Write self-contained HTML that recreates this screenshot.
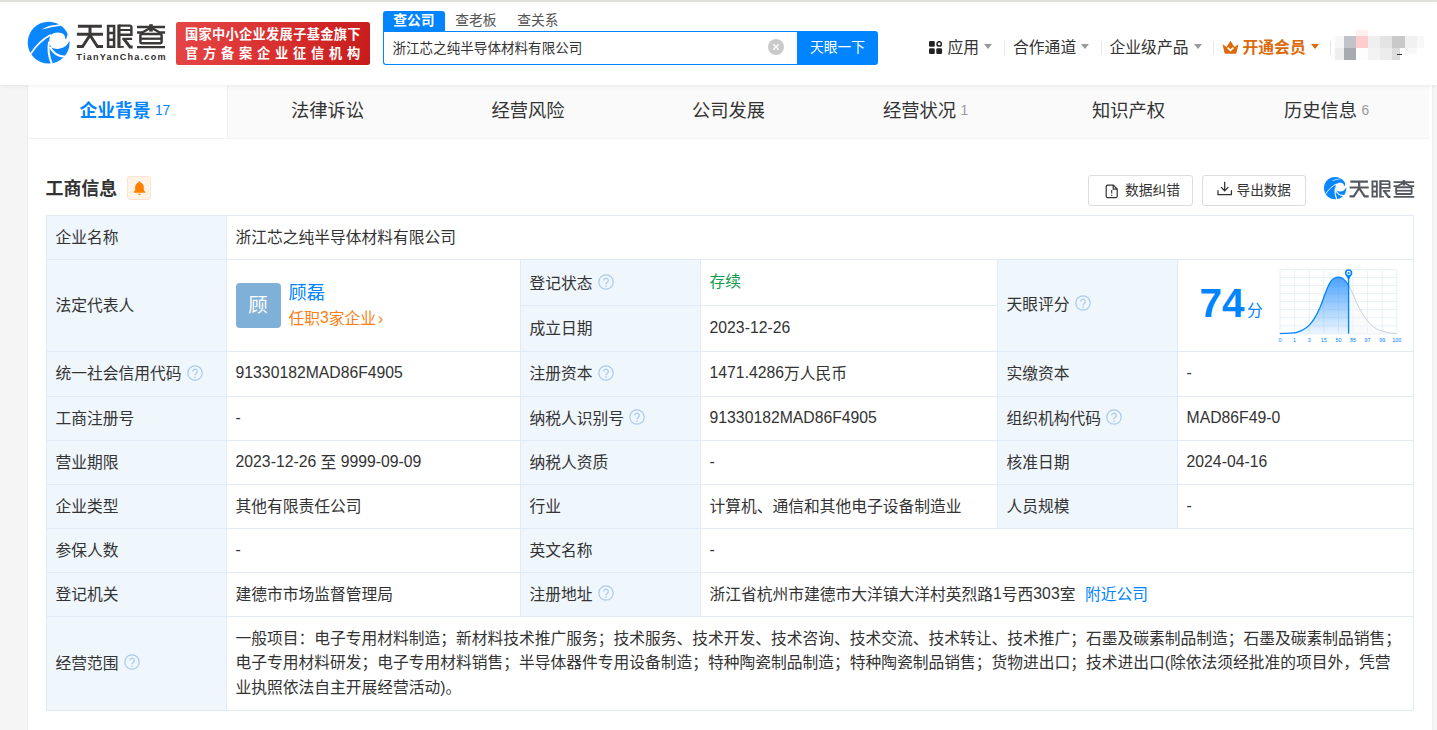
<!DOCTYPE html>
<html lang="zh-CN">
<head>
<meta charset="utf-8">
<title>浙江芯之纯半导体材料有限公司 - 天眼查</title>
<style>
*{box-sizing:border-box;margin:0;padding:0}
html,body{width:1437px;height:730px;overflow:hidden}
body{background:#f5f5f5;font-family:"Liberation Sans","Noto Sans CJK SC",sans-serif;color:#333;position:relative;font-size:15.75px;line-height:24px}
.abs{position:absolute;white-space:nowrap}
a{color:inherit;text-decoration:none}
/* top strip + header */
#strip{left:0;top:0;width:1437px;height:2px;background:#e3e2de}
#header{left:0;top:2px;width:1437px;height:83px;background:#fff;box-shadow:0 1px 4px rgba(0,0,0,.07);z-index:3}
#domain{left:76.3px;top:50.3px;font-size:9.1px;line-height:14px;font-weight:bold;letter-spacing:1.24px;color:#2f2d2d}
#badge{left:176px;top:22px;width:194px;height:43px;border-radius:2.5px;background:linear-gradient(100deg,#e64646 0%,#d93030 50%,#c81c1c 100%);color:#fff;font-weight:bold}
#badge div{position:absolute;left:9px;white-space:nowrap;font-size:13.2px;line-height:18px}
#b1{top:4.3px;letter-spacing:.33px}
#b2{top:23.3px;letter-spacing:4.8px}
/* search */
.stab{top:11px;width:62px;height:21px;font-size:13.75px;line-height:20px;text-align:center;color:#555}
#st1{left:383px;background:#0084ff;color:#fff;font-weight:bold;border-radius:3px 3px 0 0}
#st2{left:445px}
#st3{left:507px}
#sbox{left:383px;top:31px;width:415px;height:34px;border:1.5px solid #0084ff;border-right:0;border-radius:0 0 0 3px;background:#fff}
#stext{left:392.5px;top:38.5px;font-size:13.57px;line-height:20px;color:#333}
#sclear{left:767.5px;top:39px;width:16px;height:16px}
#sbtn{left:797px;top:31px;width:81px;height:34px;background:#0084ff;border-radius:0 3px 3px 0;color:#fff;font-size:13.8px;line-height:33px;text-align:center}
/* nav */
.nav{top:36px;font-size:15.8px;line-height:24px;color:#333}
.sep{top:41px;width:1px;height:14px;background:#e3e6ea}
.caret{width:0;height:0;border-left:4.2px solid transparent;border-right:4.2px solid transparent;border-top:5px solid #999;top:44px}
/* container */
#wrap{left:28px;top:85px;width:1404px;height:660px;background:#fff;box-shadow:0 0 2px rgba(0,0,0,.08)}
#tabs{left:28px;top:85px;width:1401px;height:54px;background:#fafafa;border-bottom:1px solid #f2f2f2}
#tab1{left:28px;top:85px;width:200px;height:53px;background:#fff;border-right:1px solid #f0f0f0}
.tab{top:98px;font-size:18.3px;line-height:26px;color:#333}
.tab small{font-size:13.8px;color:#999;font-weight:normal;margin-left:4.3px;position:relative;top:-2px}
#t1{color:#0084ff;font-weight:bold;font-size:17.8px}
#t1 small{color:#0084ff}
/* section head */
#h2{left:45.5px;top:175.5px;font-size:17.95px;line-height:26px;font-weight:bold;color:#333}
#bell{left:127px;top:176px;width:24px;height:24px;background:#fff3e8;border:1px solid #ffe3cc;border-radius:3px}
.btn{top:175px;height:31px;border:1px solid #dcdcdc;border-radius:3px;background:#fff;font-size:13.75px;line-height:29px;color:#333}
/* table */
#grid{left:46px;top:215px;width:1368px;height:496px;background:#e1ebf5;padding:1px;display:grid;gap:1px;
 grid-template-columns:179px 293px 179px 296px 179px 235px;
 grid-template-rows:43px 45px 45px 44px 43px 43px 43px 43px 43px 93px}
#grid>div{background:#fff;position:relative;font-size:15.75px;padding:0 0 0 8.6px;display:flex;align-items:center;white-space:nowrap}
.c{display:block;line-height:24px}
#grid>div.l{background:#eff6fc}
.q{display:inline-block;width:16px;height:16px;margin-left:5px;vertical-align:middle;position:relative;top:-1.5px;flex:none}
.blue{color:#0084ff}
.n{position:relative;top:-0.6px}

.ava{display:inline-block;width:45px;height:45px;border-radius:4px;background:#7fb0d8;color:#fff;font-size:19.5px;line-height:44px;text-align:center;flex:none}
.rep{display:inline-block;margin-left:8px;line-height:25px}
.rep a{display:block}
.nm{font-size:18.2px}
.org{color:#fb7f14}
.org i{font-style:normal;margin-left:2px}
#grid>div#scope{white-space:nowrap;display:block;line-height:24.5px;padding-top:9.75px}
.px{position:absolute;display:block}
</style>
</head>
<body>
<div id="strip" class="abs"></div>
<div id="header" class="abs"></div>

<div id="hc" class="abs" style="left:0;top:0;z-index:4">
<!-- logo -->
<svg class="abs" style="left:24.05px;top:18.35px" width="49.3" height="49.3" viewBox="0 0 730 730">
 <circle cx="365" cy="365" r="310" fill="#0a86ff"/>
 <path fill="#fff" d="M388,258C440,205 545,195 595,250C610,275 612,300 610,318L628,300C640,270 645,250 648,235L730,225L730,345L672,338C650,400 590,455 500,458C460,458 430,450 408,438C375,400 365,320 388,258Z"/>
 <path fill="#fff" d="M262,172C330,125 430,100 545,98L545,113C460,122 350,148 262,172Z"/>
 <path fill="none" stroke="#fff" stroke-width="25" d="M398,248C280,310 170,420 98,532"/>
 <path fill="none" stroke="#fff" stroke-width="30" d="M372,350C350,470 370,580 412,676"/>
 <path fill="none" stroke="#fff" stroke-width="32" d="M386,428C416,508 500,576 622,574"/>
</svg>
<svg class="abs" style="left:72px;top:20px" width="100" height="32" viewBox="0 0 100 32" stroke="#3b3838">
 <g id="tyc" fill="none">
  <path stroke-width="3" d="M5.9,6.3H29.9M4.9,14.3H31M18,5V14.3M18.6,14.3L10.6,26.5H4.9M17.4,14.3L25.4,26.5H31"/>
  <path stroke-width="2.55" d="M36.1,6H42.1V26.8H36.1ZM36.1,13H42.1M36.1,19.8H42.1"/>
  <path stroke-width="3.2" d="M46.95,4.5V27.8"/>
  <path stroke-width="2.45" d="M47,5.6H57.8a1.6,1.6 0 0 1 1.6,1.6V14.7H47"/>
  <path stroke-width="2.1" d="M47,10H59.4M50.3,18.9H60.1"/>
  <path stroke-width="2.9" d="M51.9,19L58,27H60.7"/>
  <path stroke-width="1.8" d="M46,26.9H51.8"/>
  <path stroke-width="3.6" d="M79,4.2V11.6"/>
  <path stroke-width="2.3" d="M65,7H93M65,27.1H93"/>
  <path stroke-width="2.4" d="M65,12.5H70.2L77.8,8.2M93,12.5H87.8L80.2,8.2"/>
  <rect x="68.4" y="14" width="21.2" height="9.2" rx="1.2" stroke-width="2.5"/>
  <path stroke-width="2.3" d="M68.4,18.7H89.6"/>
 </g>
</svg>
<div id="domain" class="abs">TianYanCha.com</div>
<div id="badge" class="abs bd"><div id="b1">国家中小企业发展子基金旗下</div><div id="b2">官方备案企业征信机构</div></div>
<!-- search -->
<div id="st1" class="abs stab bd">查公司</div>
<div id="st2" class="abs stab">查老板</div>
<div id="st3" class="abs stab">查关系</div>
<div id="sbox" class="abs"></div>
<div id="stext" class="abs">浙江芯之纯半导体材料有限公司</div>
<svg id="sclear" class="abs" viewBox="0 0 16 16"><circle cx="8" cy="8" r="8" fill="#c9c9c9"/><path d="M5.2,5.2L10.8,10.8M10.8,5.2L5.2,10.8" stroke="#fff" stroke-width="1.3" fill="none"/></svg>
<div id="sbtn" class="abs">天眼一下</div>
<!-- nav -->
<svg class="abs" style="left:929px;top:41px" width="14" height="14" viewBox="0 0 14 14"><rect x="0" y="0" width="5.8" height="5.8" rx="1.4" fill="#222"/><rect x="0" y="7.3" width="5.8" height="5.8" rx="1.4" fill="#222"/><rect x="7.3" y="7.3" width="5.8" height="5.8" rx="1.4" fill="#222"/><circle cx="10.2" cy="2.9" r="2.2" fill="none" stroke="#222" stroke-width="1.5"/></svg>
<div class="abs nav" style="left:947.5px">应用</div>
<div class="abs caret" style="left:984px"></div>
<div class="abs sep" style="left:1004px"></div>
<div class="abs nav" style="left:1013px">合作通道</div>
<div class="abs caret" style="left:1081px"></div>
<div class="abs sep" style="left:1101px"></div>
<div class="abs nav" style="left:1109.5px">企业级产品</div>
<div class="abs caret" style="left:1193.5px"></div>
<div class="abs sep" style="left:1213px"></div>
<svg class="abs" style="left:1221.5px;top:40px" width="17" height="15" viewBox="0 0 17 15"><path fill="#dc6a0c" d="M0.6,4.2L4.6,7L8.5,0.8L12.4,7L16.4,4.2L14.6,12.6Q14.4,13.8 13.2,13.8H3.8Q2.6,13.8 2.4,12.6Z"/><path d="M5.6,7.6L8.5,10.4L11.4,7.6" fill="none" stroke="#fff" stroke-width="1.7"/></svg>
<div class="abs nav bd" style="left:1242.5px;color:#dc6a0c;font-weight:bold">开通会员</div>
<div class="abs caret" style="left:1311px;border-top-color:#dc6a0c"></div>
<div class="abs sep" style="left:1330px"></div>
<!-- pixelated avatar -->
<div class="abs" style="left:1335px;top:30px;width:90px;height:30px">
 <i class="px" style="left:0;top:6px;width:9px;height:12px;background:#f7f7f7"></i>
 <i class="px" style="left:9px;top:6px;width:12px;height:12px;background:#c1c3c8"></i>
 <i class="px" style="left:21px;top:0;width:12px;height:6px;background:#fff0f0"></i>
 <i class="px" style="left:21px;top:6px;width:12px;height:12px;background:#ffcdcd"></i>
 <i class="px" style="left:33px;top:6px;width:12px;height:12px;background:#efefef"></i>
 <i class="px" style="left:45px;top:6px;width:12px;height:12px;background:#e4e4e4"></i>
 <i class="px" style="left:57px;top:6px;width:12.5px;height:12px;background:#c9c9c9"></i>
 <i class="px" style="left:69.5px;top:6px;width:12px;height:12px;background:#f1f1f1"></i>
 <i class="px" style="left:81.5px;top:6px;width:7px;height:12px;background:#f8f8f8"></i>
 <i class="px" style="left:0;top:18px;width:9px;height:12px;background:#eeeeee"></i>
 <i class="px" style="left:9px;top:18px;width:12px;height:12px;background:#a7abb0"></i>
 <i class="px" style="left:21px;top:18px;width:12px;height:12px;background:#fdfdfd"></i>
 <i class="px" style="left:33px;top:18px;width:12px;height:12px;background:#f3f3f3"></i>
 <i class="px" style="left:45px;top:18px;width:12px;height:12px;background:#ececec"></i>
 <i class="px" style="left:57px;top:18px;width:8px;height:12px;background:#dcdcdc"></i>
 <i class="px" style="left:69.5px;top:18px;width:12px;height:6px;background:#f8f8f8"></i>
 <i class="px" style="left:62px;top:23.5px;width:5px;height:1.5px;background:#333"></i>
</div>
</div>
<div id="wrap" class="abs"></div>
<div id="tabs" class="abs"></div>
<div id="tab1" class="abs"></div>

<!-- tab labels -->
<div id="t1" class="abs tab bd" style="left:79.5px">企业背景<small>17</small></div>
<div class="abs tab" style="left:291px">法律诉讼</div>
<div class="abs tab" style="left:491.5px">经营风险</div>
<div class="abs tab" style="left:692px">公司发展</div>
<div class="abs tab" style="left:883px">经营状况<small>1</small></div>
<div class="abs tab" style="left:1092px">知识产权</div>
<div class="abs tab" style="left:1284px">历史信息<small>6</small></div>
<!-- section head -->
<div id="h2" class="abs bd">工商信息</div>
<div id="bell" class="abs"><svg style="position:absolute;left:4.5px;top:4px" width="13" height="15" viewBox="0 0 13 15"><path fill="#ff8000" d="M6.5,0.3a1.1,1.1 0 0 1 1.1,1.1v0.3c2,0.5 3.2,2.2 3.2,4.3v3.2l1.6,1.7v0.9H0.6v-0.9L2.2,9.2V6c0-2.1 1.2-3.8 3.2-4.3V1.4A1.1,1.1 0 0 1 6.5,0.3ZM4.6,12.7h3.8l-1.9,1.6Z"/></svg></div>
<div class="abs btn" style="left:1088px;width:105px"><svg style="position:absolute;left:16px;top:8px" width="14" height="15" viewBox="0 0 14 15"><path d="M2.6,1.2H8.4L12.2,5V12.2a1.4,1.4 0 0 1 -1.4,1.4H2.6a1.4,1.4 0 0 1 -1.4,-1.4V2.6A1.4,1.4 0 0 1 2.6,1.2ZM8.2,1.4V5.2H12" fill="none" stroke="#333" stroke-width="1.2"/><path d="M6.7,6V9.6M6.7,10.8V11.9" stroke="#333" stroke-width="1.1" fill="none"/></svg><span style="position:absolute;left:36px;top:0">数据纠错</span></div>
<div class="abs btn" style="left:1202px;width:104px"><svg style="position:absolute;left:14.2px;top:5.2px" width="15.4" height="15.4" viewBox="0 0 16 16"><path d="M8,0.8V10M4.2,6.4L8,10.2L11.8,6.4M1,9.6V14.2H15V9.6" fill="none" stroke="#333" stroke-width="1.3"/></svg><span style="position:absolute;left:33.6px;top:0;font-size:13.6px">导出数据</span></div>
<svg class="abs" style="left:1321.8px;top:175.1px" width="26.3" height="26.3" viewBox="0 0 730 730">
 <circle cx="365" cy="365" r="310" fill="#0a86ff"/>
 <path fill="#fff" d="M388,258C440,205 545,195 595,250C610,275 612,300 610,318L628,300C640,270 645,250 648,235L730,225L730,345L672,338C650,400 590,455 500,458C460,458 430,450 408,438C375,400 365,320 388,258Z"/>
 <path fill="#fff" d="M262,172C330,125 430,100 545,98L545,113C460,122 350,148 262,172Z"/>
 <path fill="none" stroke="#fff" stroke-width="25" d="M398,248C280,310 170,420 98,532"/>
 <path fill="none" stroke="#fff" stroke-width="30" d="M372,350C350,470 370,580 412,676"/>
 <path fill="none" stroke="#fff" stroke-width="32" d="M386,428C416,508 500,576 622,574"/>
</svg>
<svg class="abs" style="left:1345.6px;top:176.8px" width="73.3" height="23.5" viewBox="0 0 100 32" stroke="#54585f"><use href="#tyc"/></svg>
<!-- table -->
<div id="grid" class="abs">
 <div class="l"><span class="c">企业名称</span></div><div style="grid-column:2/7"><span class="c">浙江芯之纯半导体材料有限公司</span></div>
 <div class="l" style="grid-area:2/1/4/2"><span class="c">法定代表人</span></div>
 <div style="grid-area:2/2/4/3"><span class="ava">顾</span><span class="rep"><a class="blue nm">顾磊</a><a class="org">任职<span class="n">3</span>家企业<i>›</i></a></span></div>
 <div class="l" style="grid-area:2/3;padding-top:2px"><span class="c">登记状态</span><svg class="q" viewBox="0 0 16 16"><circle cx="8" cy="8" r="7.2" fill="none" stroke="#a9c9ec" stroke-width="1.2"/><path d="M5.7,6.4a2.3,2.3 0 1 1 3.5,2c-0.8,0.5-1.2,0.9-1.2,1.9" fill="none" stroke="#a9c9ec" stroke-width="1.2"/><circle cx="8" cy="12.1" r="0.8" fill="#a9c9ec"/></svg></div><div style="grid-area:2/4"><span class="c"><span style="color:#0a9c4a;position:relative;top:-1px">存续</span></span></div>
 <div class="l" style="grid-area:2/5/4/6;padding-bottom:2px"><span class="c">天眼评分</span><svg class="q" viewBox="0 0 16 16"><circle cx="8" cy="8" r="7.2" fill="none" stroke="#a9c9ec" stroke-width="1.2"/><path d="M5.7,6.4a2.3,2.3 0 1 1 3.5,2c-0.8,0.5-1.2,0.9-1.2,1.9" fill="none" stroke="#a9c9ec" stroke-width="1.2"/><circle cx="8" cy="12.1" r="0.8" fill="#a9c9ec"/></svg></div>
 <div style="grid-area:2/6/4/7" id="score"><span class="abs" style="left:21.5px;top:23.4px;font-size:40.5px;line-height:40px;font-weight:bold;color:#0084ff;letter-spacing:0">74</span><span class="abs" style="left:69px;top:39px;font-size:15.75px;line-height:24px;color:#0084ff">分</span>
<svg class="abs" style="left:98px;top:2px" width="126" height="84" viewBox="0 0 126 84">
 <defs><linearGradient id="cg" x1="0" y1="0" x2="0" y2="1"><stop offset="0" stop-color="#2b93ff" stop-opacity=".85"/><stop offset="1" stop-color="#2b93ff" stop-opacity=".08"/></linearGradient></defs>
 <path d="M4.0,7.4V71.8M18.6,7.4V71.8M33.2,7.4V71.8M47.8,7.4V71.8M62.4,7.4V71.8M77.0,7.4V71.8M91.6,7.4V71.8M106.2,7.4V71.8M120.8,7.4V71.8M4,7.4H120.8M4,15.5H120.8M4,23.5H120.8M4,31.6H120.8M4,39.6H120.8M4,47.6H120.8M4,55.7H120.8M4,63.8H120.8M4,71.8H120.8" fill="none" stroke="#e8f0f9" stroke-width="1"/>
 <path d="M72.6,23.3C73.3,24.6 75.4,28.6 76.7,31.4C78.0,34.3 78.9,37.3 80.4,40.5C81.9,43.6 84.0,47.4 85.8,50.4C87.6,53.4 89.4,56.3 91.2,58.6C93.0,60.8 94.8,62.5 96.6,64.0C98.5,65.5 99.7,66.6 102.1,67.6C104.5,68.7 108.0,69.7 111.1,70.3C114.2,71.0 119.1,71.4 120.7,71.6L120.7,71.6L72.6,71.6Z" fill="#f4f5f7" fill-opacity=".45"/>
 <path d="M72.6,23.3C73.3,24.6 75.4,28.6 76.7,31.4C78.0,34.3 78.9,37.3 80.4,40.5C81.9,43.6 84.0,47.4 85.8,50.4C87.6,53.4 89.4,56.3 91.2,58.6C93.0,60.8 94.8,62.5 96.6,64.0C98.5,65.5 99.7,66.6 102.1,67.6C104.5,68.7 108.0,69.7 111.1,70.3C114.2,71.0 119.1,71.4 120.7,71.6" fill="none" stroke="#c5d0dc" stroke-width="1"/>
 <path d="M3.8,71.6C5.4,71.5 10.6,71.4 13.4,71.2C16.2,71.0 18.2,71.0 20.7,70.3C23.1,69.7 25.8,68.5 27.9,67.2C30.0,66.0 31.5,65.0 33.3,63.1C35.1,61.2 36.9,58.9 38.7,55.8C40.6,52.8 42.7,48.4 44.2,45.0C45.7,41.6 46.6,38.6 47.8,35.4C49.0,32.2 50.2,28.7 51.4,26.0C52.6,23.3 53.8,20.8 55.0,19.1C56.2,17.5 57.4,16.7 58.6,16.0C59.9,15.4 61.1,15.1 62.3,15.1C63.5,15.1 64.7,15.4 65.9,16.0C67.1,16.7 68.4,17.9 69.5,19.1C70.6,20.3 72.1,22.6 72.6,23.3L72.6,71.6L3.8,71.6Z" fill="url(#cg)"/>
 <path d="M3.8,71.6C5.4,71.5 10.6,71.4 13.4,71.2C16.2,71.0 18.2,71.0 20.7,70.3C23.1,69.7 25.8,68.5 27.9,67.2C30.0,66.0 31.5,65.0 33.3,63.1C35.1,61.2 36.9,58.9 38.7,55.8C40.6,52.8 42.7,48.4 44.2,45.0C45.7,41.6 46.6,38.6 47.8,35.4C49.0,32.2 50.2,28.7 51.4,26.0C52.6,23.3 53.8,20.8 55.0,19.1C56.2,17.5 57.4,16.7 58.6,16.0C59.9,15.4 61.1,15.1 62.3,15.1C63.5,15.1 64.7,15.4 65.9,16.0C67.1,16.7 68.4,17.9 69.5,19.1C70.6,20.3 72.1,22.6 72.6,23.3" fill="none" stroke="#0084ff" stroke-width="1.3"/>
 <path d="M72.6,14V71.6" stroke="#0084ff" stroke-width="1.4" fill="none"/>
 <path d="M70.3,13.6H74.9L72.6,18.4Z" fill="#0084ff"/>
 <circle cx="72.6" cy="11" r="2.9" fill="#fff" stroke="#0084ff" stroke-width="1.5"/>
 <circle cx="72.6" cy="11" r="1.1" fill="#0084ff"/>
 <g font-family="Liberation Sans, sans-serif" font-size="5.4" fill="#0084ff"><text x="4.0" y="79.6" text-anchor="middle">0</text><text x="18.6" y="79.6" text-anchor="middle">1</text><text x="33.2" y="79.6" text-anchor="middle">3</text><text x="47.8" y="79.6" text-anchor="middle">15</text><text x="62.4" y="79.6" text-anchor="middle">50</text><text x="77.0" y="79.6" text-anchor="middle">85</text><text x="91.6" y="79.6" text-anchor="middle">97</text><text x="106.2" y="79.6" text-anchor="middle">99</text><text x="120.8" y="79.6" text-anchor="middle">100</text></g>
</svg></div>
 <div class="l" style="grid-area:3/3"><span class="c">成立日期</span></div><div style="grid-area:3/4"><span class="c"><span class="n">2023-12-26</span></span></div>
 <div class="l"><span class="c">统一社会信用代码</span><svg class="q" viewBox="0 0 16 16"><circle cx="8" cy="8" r="7.2" fill="none" stroke="#a9c9ec" stroke-width="1.2"/><path d="M5.7,6.4a2.3,2.3 0 1 1 3.5,2c-0.8,0.5-1.2,0.9-1.2,1.9" fill="none" stroke="#a9c9ec" stroke-width="1.2"/><circle cx="8" cy="12.1" r="0.8" fill="#a9c9ec"/></svg></div><div><span class="c"><span class="n">91330182MAD86F4905</span></span></div><div class="l"><span class="c">注册资本</span><svg class="q" viewBox="0 0 16 16"><circle cx="8" cy="8" r="7.2" fill="none" stroke="#a9c9ec" stroke-width="1.2"/><path d="M5.7,6.4a2.3,2.3 0 1 1 3.5,2c-0.8,0.5-1.2,0.9-1.2,1.9" fill="none" stroke="#a9c9ec" stroke-width="1.2"/><circle cx="8" cy="12.1" r="0.8" fill="#a9c9ec"/></svg></div><div><span class="c"><span class="n">1471.4286</span>万人民币</span></div><div class="l"><span class="c">实缴资本</span></div><div><span class="c"><span class="n">-</span></span></div>
 <div class="l"><span class="c">工商注册号</span></div><div><span class="c"><span class="n">-</span></span></div><div class="l"><span class="c">纳税人识别号</span><svg class="q" viewBox="0 0 16 16"><circle cx="8" cy="8" r="7.2" fill="none" stroke="#a9c9ec" stroke-width="1.2"/><path d="M5.7,6.4a2.3,2.3 0 1 1 3.5,2c-0.8,0.5-1.2,0.9-1.2,1.9" fill="none" stroke="#a9c9ec" stroke-width="1.2"/><circle cx="8" cy="12.1" r="0.8" fill="#a9c9ec"/></svg></div><div><span class="c"><span class="n">91330182MAD86F4905</span></span></div><div class="l"><span class="c">组织机构代码</span><svg class="q" viewBox="0 0 16 16"><circle cx="8" cy="8" r="7.2" fill="none" stroke="#a9c9ec" stroke-width="1.2"/><path d="M5.7,6.4a2.3,2.3 0 1 1 3.5,2c-0.8,0.5-1.2,0.9-1.2,1.9" fill="none" stroke="#a9c9ec" stroke-width="1.2"/><circle cx="8" cy="12.1" r="0.8" fill="#a9c9ec"/></svg></div><div><span class="c"><span class="n">MAD86F49-0</span></span></div>
 <div class="l"><span class="c">营业期限</span></div><div><span class="c"><span class="n">2023-12-26</span>&nbsp;至&nbsp;<span class="n">9999-09-09</span></span></div><div class="l"><span class="c">纳税人资质</span></div><div><span class="c"><span class="n">-</span></span></div><div class="l"><span class="c">核准日期</span></div><div><span class="c"><span class="n">2024-04-16</span></span></div>
 <div class="l"><span class="c">企业类型</span></div><div><span class="c">其他有限责任公司</span></div><div class="l"><span class="c">行业</span></div><div><span class="c">计算机、通信和其他电子设备制造业</span></div><div class="l"><span class="c">人员规模</span></div><div><span class="c"><span class="n">-</span></span></div>
 <div class="l"><span class="c">参保人数</span></div><div><span class="c"><span class="n">-</span></span></div><div class="l"><span class="c">英文名称</span></div><div style="grid-column:4/7"><span class="c"><span class="n">-</span></span></div>
 <div class="l"><span class="c">登记机关</span></div><div><span class="c">建德市市场监督管理局</span></div><div class="l"><span class="c">注册地址</span><svg class="q" viewBox="0 0 16 16"><circle cx="8" cy="8" r="7.2" fill="none" stroke="#a9c9ec" stroke-width="1.2"/><path d="M5.7,6.4a2.3,2.3 0 1 1 3.5,2c-0.8,0.5-1.2,0.9-1.2,1.9" fill="none" stroke="#a9c9ec" stroke-width="1.2"/><circle cx="8" cy="12.1" r="0.8" fill="#a9c9ec"/></svg></div><div style="grid-column:4/7"><span class="c">浙江省杭州市建德市大洋镇大洋村英烈路<span class="n">1</span>号西<span class="n">303</span>室<a class="blue" style="margin-left:9.5px">附近公司</a></span></div>
 <div class="l"><span class="c">经营范围</span><svg class="q" viewBox="0 0 16 16"><circle cx="8" cy="8" r="7.2" fill="none" stroke="#a9c9ec" stroke-width="1.2"/><path d="M5.7,6.4a2.3,2.3 0 1 1 3.5,2c-0.8,0.5-1.2,0.9-1.2,1.9" fill="none" stroke="#a9c9ec" stroke-width="1.2"/><circle cx="8" cy="12.1" r="0.8" fill="#a9c9ec"/></svg></div><div style="grid-column:2/7" id="scope">一般项目：电子专用材料制造；新材料技术推广服务；技术服务、技术开发、技术咨询、技术交流、技术转让、技术推广；石墨及碳素制品制造；石墨及碳素制品销售；<br>电子专用材料研发；电子专用材料销售；半导体器件专用设备制造；特种陶瓷制品制造；特种陶瓷制品销售；货物进出口；技术进出口(除依法须经批准的项目外，凭营<br>业执照依法自主开展经营活动)。</div>
</div>
</body>
</html>
